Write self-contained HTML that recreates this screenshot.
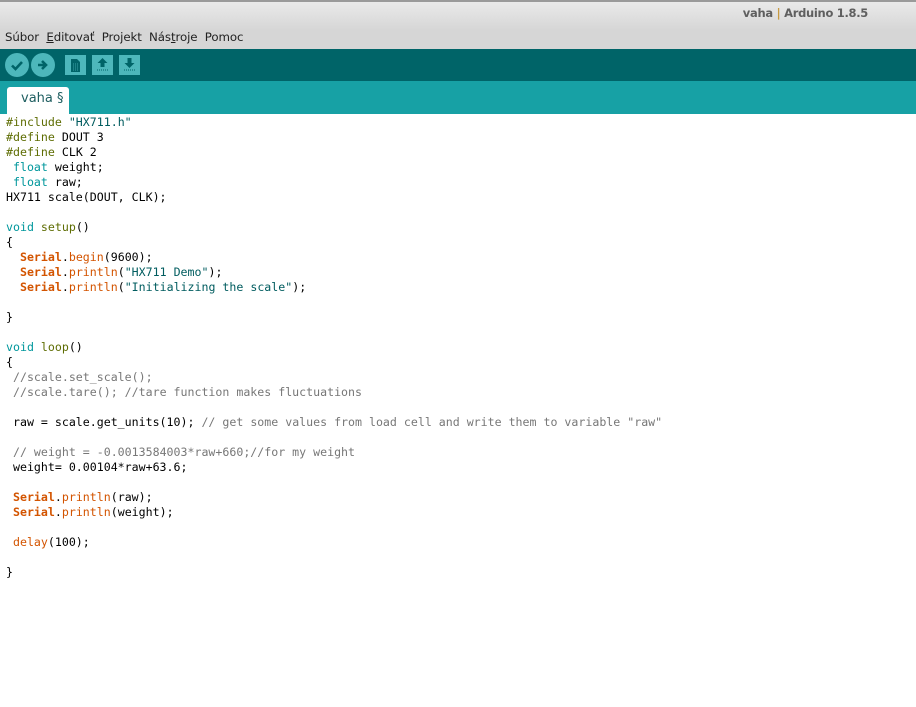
<!DOCTYPE html>
<html><head><meta charset="utf-8"><style>
*{margin:0;padding:0}
body{width:916px;height:707px;overflow:hidden;background:#fff;font-family:"Liberation Sans","DejaVu Sans",sans-serif;position:relative}
#title{position:absolute;left:0;top:0;width:916px;height:49px;background:linear-gradient(#ebebeb,#d6d6d6 30px,#d6d6d6)}
#title .bar{position:absolute;top:0;left:0;width:916px;height:2px;background:#9a9a9a}
#title .t{position:absolute;right:48px;top:6px;font:bold 11.5px "DejaVu Sans",sans-serif;color:#5f5f5f;letter-spacing:-0.3px}
#title .t span{color:#c89a40}
#menu{position:absolute;left:5px;top:30px;font:11.8px "DejaVu Sans",sans-serif;color:#222;white-space:pre;letter-spacing:-0.1px}
#tool{position:absolute;left:0;top:49px;width:916px;height:32px;background:#006468}
.c{position:absolute;top:4px;width:24px;height:24px;border-radius:50%;background:#4db7bb}
.s{position:absolute;top:6px;width:21px;height:20px;background:#4db7bb}
#tabs{position:absolute;left:0;top:81px;width:916px;height:33px;background:#17a1a5}
#tab{position:absolute;left:7px;top:6px;width:62px;height:27px;background:#fff;border-radius:3px 3px 0 0;font:13px "DejaVu Sans",sans-serif;color:#1e5e60;line-height:24px;text-indent:14px}
#code{position:absolute;left:6px;top:115px;font:11.6px/15px "DejaVu Sans Mono",monospace;color:#000;white-space:pre}
.p{color:#5e6d03}.k{color:#00979c}.o{color:#d35400;font-weight:bold}.f{color:#d35400}.q{color:#005c5f}.m{color:#777}
</style></head><body>
<div id="title"><div class="bar"></div><div class="t">vaha <span>|</span> Arduino 1.8.5</div></div>
<div id="menu">Súbor  <u>E</u>ditovať  Projekt  Nás<u>t</u>roje  Pomoc</div>
<div id="tool">
<div class="c" style="left:5px"><svg width="24" height="24"><path d="M7 12.5l3.5 3.5 6.5-7" stroke="#006468" stroke-width="2.6" fill="none"/></svg></div>
<div class="c" style="left:31px"><svg width="24" height="24"><path d="M7 12h7M11 8l4 4-4 4" stroke="#006468" stroke-width="2.6" fill="none"/></svg></div>
<div class="s" style="left:65px"><svg width="21" height="20"><path d="M6 4h6l3 3v10H6z" fill="#006468"/><path d="M8 9h6M8 11h6M8 13h6M8 15h6" stroke="#4db7bb" stroke-width="0.8" stroke-dasharray="1 1"/></svg></div>
<div class="s" style="left:92px"><svg width="21" height="20"><path d="M10.5 3l5 5h-3v4h-4V8h-3z" fill="#006468"/><path d="M5 15h11" stroke="#006468" stroke-dasharray="1 1"/></svg></div>
<div class="s" style="left:119px"><svg width="21" height="20"><path d="M10.5 13l5-5h-3V3h-4v5h-3z" fill="#006468"/><path d="M5 15h11" stroke="#006468" stroke-dasharray="1 1"/></svg></div>
</div>
<div id="tabs"><div id="tab">vaha §</div></div>
<div id="code"><span class="p">#include</span> <span class="q">"HX711.h"</span>
<span class="p">#define</span> DOUT 3
<span class="p">#define</span> CLK 2
 <span class="k">float</span> weight;
 <span class="k">float</span> raw;
HX711 scale(DOUT, CLK);

<span class="k">void</span> <span class="p">setup</span>()
{
  <span class="o">Serial</span>.<span class="f">begin</span>(9600);
  <span class="o">Serial</span>.<span class="f">println</span>(<span class="q">"HX711 Demo"</span>);
  <span class="o">Serial</span>.<span class="f">println</span>(<span class="q">"Initializing the scale"</span>);

}

<span class="k">void</span> <span class="p">loop</span>()
{
 <span class="m">//scale.set_scale();</span>
 <span class="m">//scale.tare(); //tare function makes fluctuations</span>

 raw = scale.get_units(10); <span class="m">// get some values from load cell and write them to variable "raw"</span>

 <span class="m">// weight = -0.0013584003*raw+660;//for my weight</span>
 weight= 0.00104*raw+63.6;

 <span class="o">Serial</span>.<span class="f">println</span>(raw);
 <span class="o">Serial</span>.<span class="f">println</span>(weight);

 <span class="f">delay</span>(100);

}</div>
</body></html>
